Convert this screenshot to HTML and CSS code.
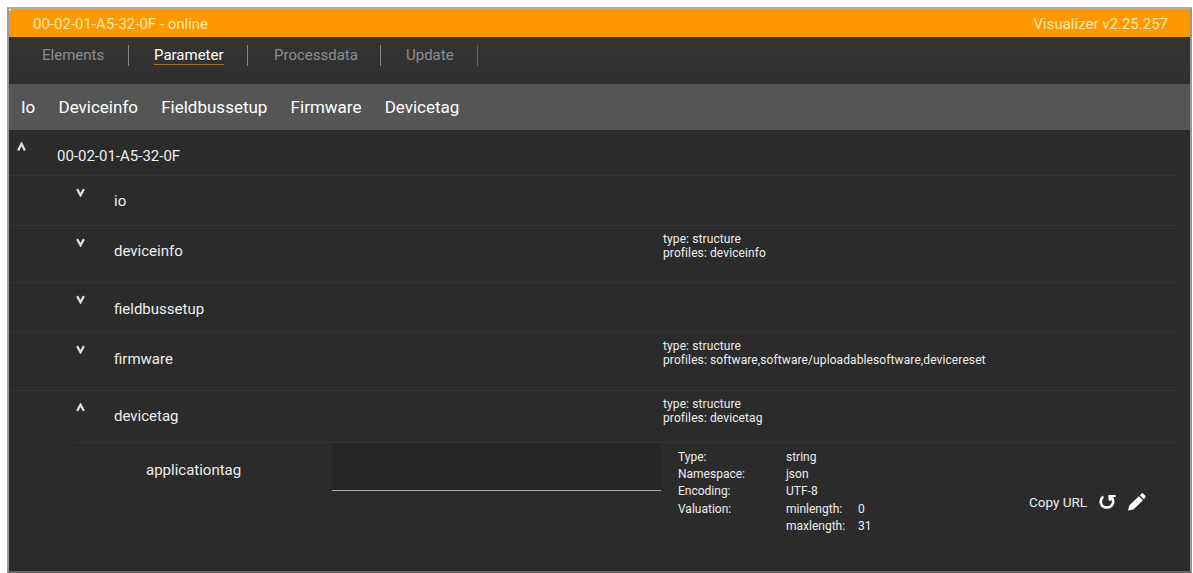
FILE: index.html
```html
<!DOCTYPE html>
<html lang="en">
<head>
  <meta charset="UTF-8">
  <meta name="viewport" content="width=device-width, initial-scale=1.0">
  <title>Visualizer</title>
  <link rel="stylesheet" href="styles.css">
</head>
<body>

  <div id="container">
    <header class="titlebar">
      <span>00-02-01-A5-32-0F - online</span>
      <span class="version">Visualizer v2.25.257</span>
    </header>

    <!-- Main navigation -->
    <nav class="tabs">
      <a class="tab elements">Elements</a>
      <a class="tab parameter active"><span>Parameter</span></a>
      <a class="tab processdata">Processdata</a>
      <a class="tab update">Update</a>
    </nav>

    <!-- Shortcuts -->
    <nav class="shortcuts">
      <a>Io</a>
      <a>Deviceinfo</a>
      <a>Fieldbussetup</a>
      <a>Firmware</a>
      <a>Devicetag</a>
    </nav>

    <!-- Parameter tree -->
    <main class="tree">
      <div class="row root">
        <svg class="caret" viewBox="0 0 8 8"><path d="M1 7.5L4 1.5L7 7.5"/></svg>
        <span class="name">00-02-01-A5-32-0F</span>
      </div>
      <div class="row io">
        <svg class="caret" viewBox="0 0 8 8"><path d="M1 1L4 6.5L7 1"/></svg>
        <span class="name">io</span>
      </div>
      <div class="row deviceinfo">
        <svg class="caret" viewBox="0 0 8 8"><path d="M1 1L4 6.5L7 1"/></svg>
        <span class="name">deviceinfo</span>
        <div class="meta">
          <div>type: structure</div>
          <div>profiles: deviceinfo</div>
        </div>
      </div>
      <div class="row fieldbus">
        <svg class="caret" viewBox="0 0 8 8"><path d="M1 1L4 6.5L7 1"/></svg>
        <span class="name">fieldbussetup</span>
      </div>
      <div class="row firmware">
        <svg class="caret" viewBox="0 0 8 8"><path d="M1 1L4 6.5L7 1"/></svg>
        <span class="name">firmware</span>
        <div class="meta">
          <div>type: structure</div>
          <div>profiles: software,software/uploadablesoftware,devicereset</div>
        </div>
      </div>
      <div class="row devicetag">
        <svg class="caret" viewBox="0 0 8 8"><path d="M1 7L4 1.5L7 7"/></svg>
        <span class="name">devicetag</span>
        <div class="meta">
          <div>type: structure</div>
          <div>profiles: devicetag</div>
        </div>
      </div>

      <div class="entry">
        <label class="entry-name" for="applicationtag">applicationtag</label>
        <input type="text" id="applicationtag">
        <div class="details">
          <span>Type:</span><span>string</span><span></span>
          <span>Namespace:</span><span>json</span><span></span>
          <span>Encoding:</span><span>UTF-8</span><span></span>
          <span>Valuation:</span><span>minlength:</span><span>0</span>
          <span></span><span>maxlength:</span><span>31</span>
        </div>
        <div class="actions">
          <span class="copy">Copy URL</span>
          <svg class="reload" viewBox="0 0 18 16"><path d="M4.6 2.2C-.4 6 2 13.8 8 13.8C14.4 13.8 16.4 8 14 3.6" fill="none" stroke="#fff" stroke-width="2.8"/><path d="M10 .6H17.6V2.8H15L12.4 7.2L10 6Z" fill="#fff"/></svg>
          <svg class="edit" viewBox="0 0 18 18"><path d="M0 17.5L1.3 12.5L10.8 3.2L15 7.2L5.4 16.5ZM11.8 2.2L13.6 .5Q14.5-.1 15.3 .7L17.3 2.7Q18 3.5 17.3 4.4L15.9 6.2Z" fill="#fff"/></svg>
        </div>
      </div>
    </main>
  </div>

</body>
</html>
```
FILE: styles.css
```css
/* ====== GLOBAL STYLES ====== */
* {
  box-sizing: border-box;
}

body {
  margin: 0;
  background-color: #fff;
  color: #eee;
  font-family: Roboto, sans-serif;
  font-size: 15px;
  overflow: hidden;
}

#container {
  height: 566px;
  margin: 7px 1px 0 7px;
  border: 2px solid #999;
  border-top-color: #b5ad92;
  border-bottom-color: #666;
  background: linear-gradient(#fff 10px, #2b2b2b 10px);
}

/* ====== HEADER ====== */
.titlebar {
  display: flex;
  justify-content: space-between;
  align-items: center;
  height: 28px;
  padding: 1px 22px 0 24px;
  border-top-left-radius: 4px;
  background-color: #ff9800;
  color: #ffe9ad;
}

.tabs {
  display: flex;
  height: 47px;
  padding-top: 8px;
  background: linear-gradient(#363536, #2f2f2f);
}

.tab {
  height: 21px;
  border-right: 1px solid #858585;
  color: #8c8c8c;
  line-height: 21px;
}

.elements { width: 120px; padding-left: 33px; }
.parameter { width: 119px; padding-left: 25px; }
.processdata { width: 133px; padding-left: 26px; }
.update { width: 97px; padding-left: 25px; border-color: #666; }

.tab.active {
  color: #fff;
}

.active span {
  display: inline-block;
  height: 20px;
  border-bottom: 1px solid #9a7530;
}

.shortcuts {
  display: flex;
  gap: 23.2px;
  height: 46px;
  padding-left: 12px;
  background-color: #555;
  color: #fff;
  font-size: 17px;
  line-height: 46px;
}

/* ====== TREE ====== */
.row {
  display: flex;
  border-bottom: 1px solid #343434;
  margin-right: 11px;
}

.caret {
  width: 9px;
  height: 9px;
  margin: 12px 29px 0 67px;
  fill: none;
  stroke: #ddd;
  stroke-width: 2;
}

.name {
  width: 549px;
  padding-top: 15px;
  line-height: 20px;
}

.meta {
  padding-top: 6px;
  font-size: 12px;
  letter-spacing: 0.1px;
  line-height: 14px;
  white-space: nowrap;
}

.root { height: 46px; }
.root .caret { margin: 12px 31px 0 8px; }
.root .name { padding-top: 16px; }
.io { height: 50px; }
.deviceinfo { height: 57px; }
.fieldbus { height: 50px; }
.fieldbus .name { padding-top: 16px; }
.firmware { height: 58px; }
.firmware .name { padding-top: 16px; }
.devicetag { height: 52px; margin-left: 66px; }
.devicetag .caret { margin-left: 1px; }

.entry {
  display: flex;
}

.entry-name {
  width: 323px;
  padding: 17px 0 0 137px;
  line-height: 20px;
}

#applicationtag {
  width: 329px;
  height: 48px;
  border: 0;
  border-bottom: 1px solid #aaa;
  background-color: #262626;
  color: #eee;
}

.details {
  display: grid;
  grid-template-columns: 108px 72px 60px;
  grid-auto-rows: 17.2px;
  height: 92px;
  margin-left: 17px;
  padding-top: 6px;
  font-size: 12px;
  line-height: 17px;
}

.actions {
  display: flex;
  align-items: center;
  height: 20px;
  margin: 49px 0 0 111px;
  font-size: 13.5px;
}

.copy { width: 70px; }
.reload { width: 17px; height: 16px; margin-right: 12px; }
.edit { width: 18px; height: 18px; }
```
